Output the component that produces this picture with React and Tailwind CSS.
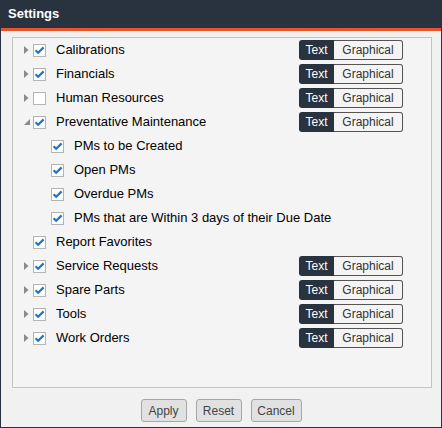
import { Fragment } from 'react'

// Settings tree rows
const ROWS = [
  { label: 'Calibrations', checked: true, arrow: 'right', toggle: true },
  { label: 'Financials', checked: true, arrow: 'right', toggle: true },
  { label: 'Human Resources', checked: false, arrow: 'right', toggle: true },
  { label: 'Preventative Maintenance', checked: true, arrow: 'down', toggle: true },
  { label: 'PMs to be Created', checked: true, child: true },
  { label: 'Open PMs', checked: true, child: true },
  { label: 'Overdue PMs', checked: true, child: true },
  { label: 'PMs that are Within 3 days of their Due Date', checked: true, child: true },
  { label: 'Report Favorites', checked: true },
  { label: 'Service Requests', checked: true, arrow: 'right', toggle: true },
  { label: 'Spare Parts', checked: true, arrow: 'right', toggle: true },
  { label: 'Tools', checked: true, arrow: 'right', toggle: true },
  { label: 'Work Orders', checked: true, arrow: 'right', toggle: true },
]

const Arrow = ({ dir }) => {
  if (!dir) return <span className="w-[14px]" />
  return (
    <span className="w-[14px] flex items-center pl-[5px]">
      {dir === 'right' ? (
        <svg width="5" height="8" viewBox="0 0 5 8"><path d="M0 0 L4.5 4 L0 8 Z" fill="#8a8a8a" /></svg>
      ) : (
        <svg width="7" height="7" viewBox="0 0 7 7"><path d="M6 0 L6 6 L0 6 Z" fill="#8a8a8a" /></svg>
      )}
    </span>
  )
}

const Checkbox = ({ checked }) => (
  <span className="w-[13px] h-[13px] border border-[#b4b4b4] bg-white flex items-center justify-center shrink-0">
    {checked && (
      <svg width="11" height="11" viewBox="0 0 11 11">
        <path d="M1.5 5.2 L4.2 7.8 L9.6 2.4" stroke="#1f74c6" strokeWidth="2.2" fill="none" />
      </svg>
    )}
  </span>
)

const Toggle = () => (
  <div className="flex h-[20px] text-[12px] font-['Liberation_Sans',Arial,sans-serif]">
    <div className="w-[35px] bg-[#29323f] text-white rounded-l-[3px] flex items-center justify-center">Text</div>
    <div className="w-[69px] bg-[#f4f4f4] text-[#333] border border-[#555] border-l-0 rounded-r-[3px] flex items-center justify-center">Graphical</div>
  </div>
)

export default function App() {
  return (
    <div className="w-[442px] h-[428px] flex flex-col bg-[#f1f1f1] border border-t-0 border-[#29323f] font-['Liberation_Sans',Tahoma,sans-serif]">
      {/* Header */}
      <div className="h-[28px] bg-[#29323f] text-white font-bold text-[13px] flex items-center pl-[7px] shrink-0">Settings</div>
      <div className="h-[3px] bg-[#e8532b] shrink-0" />

      {/* Tree panel */}
      <div className="mt-[6px] ml-[11px] mr-[9px] h-[351px] border border-[#c3c3c3] bg-[#f4f4f4]">
        {ROWS.map((r, i) => (
          <Fragment key={i}>
            <div className="h-[24px] flex items-center pr-[28px] text-[13px] text-black">
              <div className={`flex items-center flex-1 ${r.child ? 'pl-[38px]' : 'pl-[6px]'}`}>
                {!r.child && <Arrow dir={r.arrow} />}
                <Checkbox checked={r.checked} />
                <span className="ml-[10px]">{r.label}</span>
              </div>
              {r.toggle && <Toggle />}
            </div>
          </Fragment>
        ))}
      </div>

      {/* Footer buttons */}
      <div className="flex justify-center gap-[9px] mt-[11px] font-['Liberation_Sans',Arial,sans-serif] text-[12px] text-[#444]">
        <button className="w-[46px] h-[23px] bg-[#e1e1e1] border border-[#a6a6a6] rounded-[3px]">Apply</button>
        <button className="w-[46px] h-[23px] bg-[#e1e1e1] border border-[#a6a6a6] rounded-[3px]">Reset</button>
        <button className="w-[51px] h-[23px] bg-[#e1e1e1] border border-[#a6a6a6] rounded-[3px]">Cancel</button>
      </div>
    </div>
  )
}
